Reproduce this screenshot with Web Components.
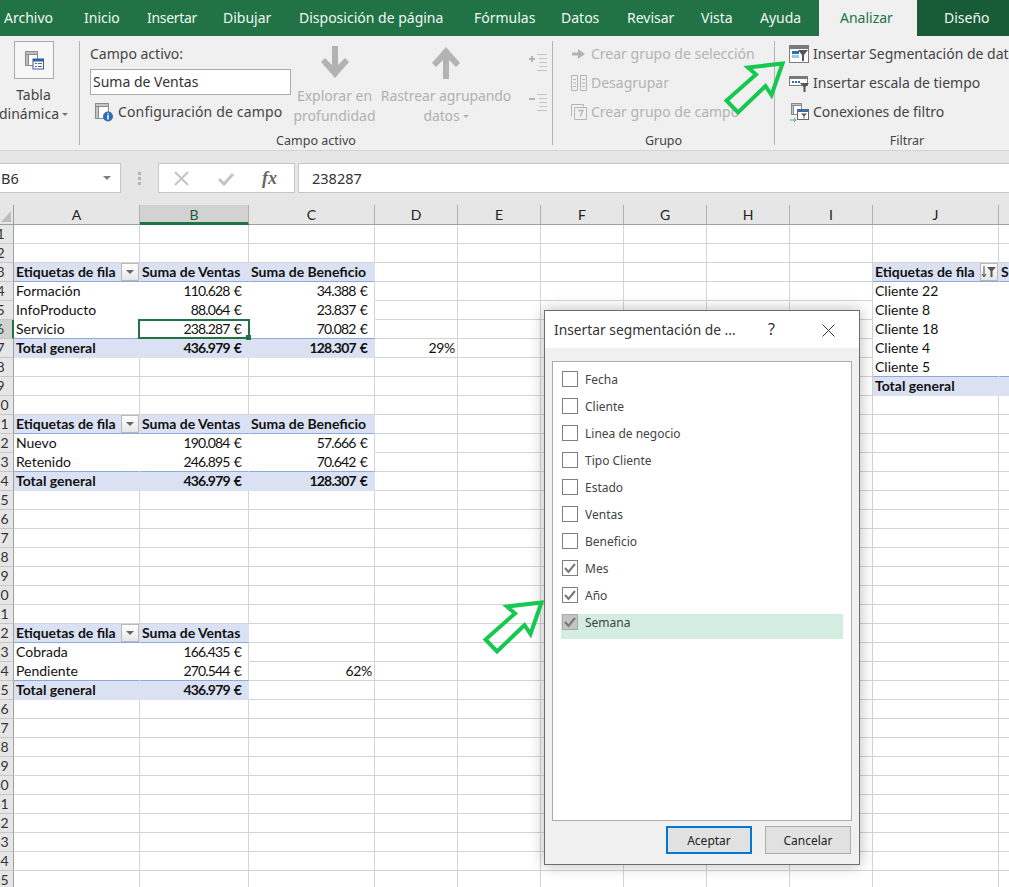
<!DOCTYPE html>
<html lang="es">
<head>
<meta charset="utf-8">
<title>Insertar segmentación de datos</title>
<style>
  html, body { margin: 0; height: 887px; overflow: hidden; background: #fff; }
  body { font-family: "Noto Sans", "Open Sans", sans-serif; position: relative; width: 1009px; }
</style>
</head>
<body>
<xl-tabs></xl-tabs>
<xl-ribbon></xl-ribbon>
<xl-formula-bar></xl-formula-bar>
<xl-sheet></xl-sheet>
<xl-dialog title-text="Insertar segmentación de ...">
  <xl-check>Fecha</xl-check>
  <xl-check>Cliente</xl-check>
  <xl-check>Linea de negocio</xl-check>
  <xl-check>Tipo Cliente</xl-check>
  <xl-check>Estado</xl-check>
  <xl-check>Ventas</xl-check>
  <xl-check>Beneficio</xl-check>
  <xl-check checked>Mes</xl-check>
  <xl-check checked>Año</xl-check>
  <xl-check checked active>Semana</xl-check>
</xl-dialog>
<xl-arrow style="left:720px;top:58px"></xl-arrow>
<xl-arrow style="left:479px;top:597px"></xl-arrow>

<script>
const UI_FONT = '"Noto Sans", "Open Sans", sans-serif'
const CELL_FONT = 'Lato, "Open Sans", sans-serif'

// Ribbon tab strip
const tabsTemplate = document.createElement('template')
tabsTemplate.innerHTML = `
  <style>
    :host { display: grid; height: 36px; background: #217346; color: #f2f7f4;
      font: 14px/35px ${UI_FONT}; white-space: nowrap;
      grid-template-columns: 84px 63px 76px 76px 175px 87px 66px 74px 59px 59px 98px 92px; }
    span { padding-left: 4px; }
    span + span { padding-left: 0; }
    .narrow { letter-spacing: -.3px; }
    .on { background: #f0f0f0; color: #217346; }
    .dark { background: #185c37; }
  </style>
  <span>Archivo</span><span>Inicio</span><span class="narrow">Insertar</span><span>Dibujar</span>
  <span>Disposición de página</span><span>Fórmulas</span><span>Datos</span><span>Revisar</span>
  <span>Vista</span><span>Ayuda</span><span class="on" style="padding-left:21px">Analizar</span>
  <span class="dark" style="padding-left:27px">Diseño</span>
`
customElements.define('xl-tabs', class extends HTMLElement {
  constructor () {
    super()
    this.attachShadow({ mode: 'open' }).appendChild(tabsTemplate.content.cloneNode(true))
  }
})

// One group of the ribbon, with its caption at the bottom
const groupTemplate = document.createElement('template')
groupTemplate.innerHTML = `
  <style>
    :host { display: flex; flex-direction: column; box-sizing: border-box; height: 104px;
      margin-top: 5px; border-right: 1px solid #b4b4b4; flex: none; }
    .body { flex: 1; min-height: 0; }
    .cap { font-size: 12.5px; line-height: 18px; height: 13px; text-align: center; color: #444; }
  </style>
  <div class="body"><slot></slot></div>
  <div class="cap"></div>
`
customElements.define('xl-group', class extends HTMLElement {
  constructor () {
    super()
    this.attachShadow({ mode: 'open' }).appendChild(groupTemplate.content.cloneNode(true))
    this.shadowRoot.querySelector('.cap').textContent = this.getAttribute('label') || ''
  }
})

// Icon plus text row used by the small ribbon commands
const cmdTemplate = document.createElement('template')
cmdTemplate.innerHTML = `
  <style>
    :host { display: flex; align-items: center; height: 29px; white-space: nowrap;
      font-size: 14px; color: #444; }
    :host([off]) { color: #b3b3b3; }
    .ico { width: var(--ico, 22px); display: flex; justify-content: center; flex: none; }
  </style>
  <span class="ico"><slot name="icon"></slot></span><slot></slot>
`
customElements.define('xl-cmd', class extends HTMLElement {
  constructor () {
    super()
    this.attachShadow({ mode: 'open' }).appendChild(cmdTemplate.content.cloneNode(true))
  }
})

// The whole ribbon
const ribbonTemplate = document.createElement('template')
ribbonTemplate.innerHTML = `
  <style>
    :host { display: flex; height: 115px; box-sizing: border-box; background: #f0f0f0;
      border-bottom: 1px solid #d4d4d4; font-size: 14px; color: #444; overflow: hidden; }
    .pivot { display: flex; flex-direction: column; align-items: center; width: 67px; white-space: nowrap; line-height: 19px; }
    .pivot .box { width: 38px; height: 36px; border: 1px solid #ababab; background: #f7f7f7;
      display: flex; align-items: center; justify-content: center; margin-bottom: 6px; flex: none; }
    .caret { display: inline-block; width: 0; height: 0; border: 3px solid transparent; border-top: 3px solid #777; border-bottom: 0; vertical-align: 3px; margin-left: 3px; }
    .active { display: flex; padding-left: 10px; }
    .field { width: 203px; flex: none; }
    .field .t { height: 28px; line-height: 26px; }
    .field .inp { box-sizing: border-box; width: 201px; height: 26px; border: 1px solid #ababab; background: #fff;
      line-height: 24px; padding-left: 2px; color: #333; }
    .field xl-cmd { --ico: 28px; height: 33px; letter-spacing: .15px; }
    .big { display: flex; flex-direction: column; align-items: center; flex: none; color: #b0b0b0;
      text-align: center; line-height: 20px; white-space: nowrap; }
    .big svg { margin: 5px 0 7px; display: block; }
    .big .caret { border-top-color: #b0b0b0; }
    .mini { display: flex; flex-direction: column; gap: 20px; padding: 12px 0 0 8px; }
    .cmds { padding: 0 0 0 13px; margin-top: -2px; }
    .f { margin-left: -2px; }
    .f xl-cmd, .g xl-cmd { --ico: 25px; height: 29px; }
    .ftext { margin-left: 2px; }
  </style>
  <xl-group style="width:80px">
    <div class="pivot">
      <div class="box">
        <svg width="20" height="20" viewBox="0 0 20 20"><path d="M1.5 1.5h12v14h-12z" fill="#fff" stroke="#8a8a8a"/><path d="M1.5 1.5h12v3h-12zM1.5 4.5h3v11h-3z" fill="#bdbdbd" stroke="#8a8a8a"/><rect x="9" y="9" width="10.5" height="10" fill="#fff" stroke="#2f5f9e"/><rect x="9" y="9" width="10.5" height="2.5" fill="#2f5f9e"/><path d="M11 13.5h2M14 13.5h4M11 16.5h2M14 16.5h4" stroke="#666"/></svg>
      </div>
      <span>Tabla</span>
      <span>dinámica<i class="caret"></i></span>
    </div>
  </xl-group>
  <xl-group style="width:473px" label="Campo activo">
    <div class="active">
      <div class="field">
        <div class="t">Campo activo:</div>
        <div class="inp">Suma de Ventas</div>
        <xl-cmd>
          <svg slot="icon" width="20" height="20" viewBox="0 0 20 20"><path d="M1.5 1.5h13v15h-13z" fill="#fff" stroke="#8a8a8a"/><path d="M1.5 1.5h13v3h-13zM1.5 4.5h3v12h-3z" fill="#c4c4c4" stroke="#8a8a8a"/><circle cx="14" cy="14.5" r="5" fill="#2f6eb5"/><path d="M14 13v4.5M14 11.2v1" stroke="#fff" stroke-width="1.5"/></svg>
          Configuración de campo
        </xl-cmd>
      </div>
      <div class="big" style="width:83px">
        <svg width="28" height="33" viewBox="0 0 28 33"><path d="M11 0h6v19l7-7 4 4-14 16L0 16l4-4 7 7z" fill="#b3b3b3"/></svg>
        <span>Explorar en</span><span>profundidad</span>
      </div>
      <div class="big" style="width:140px;letter-spacing:-.1px">
        <svg width="28" height="33" viewBox="0 0 28 33"><path d="M11 33h6V14l7 7 4-4L14 1 0 17l4 4 7-7z" fill="#b3b3b3"/></svg>
        <span>Rastrear agrupando</span><span>datos<i class="caret"></i></span>
      </div>
      <div class="mini" style="margin-left:4px">
        <svg width="20" height="20" viewBox="0 0 20 20"><path d="M1 6h6M4 3v6" stroke="#b3b3b3" stroke-width="2"/><path d="M9 1.500h10M11 5.500h8M11 9.500h8M11 13.500h8M9 17.500h10" stroke="#c6c6c6"/></svg>
        <svg width="20" height="20" viewBox="0 0 20 20"><path d="M1 6h6" stroke="#b3b3b3" stroke-width="2"/><path d="M9 1.500h10M11 5.500h8M11 9.500h8M11 13.500h8M9 17.500h10" stroke="#c6c6c6"/></svg>
      </div>
    </div>
  </xl-group>
  <xl-group class="g" style="width:222px" label="Grupo">
    <div class="cmds g">
      <xl-cmd off><svg slot="icon" width="14" height="12" viewBox="0 0 14 12"><path d="M0 4.500h6V1l7 5-7 5V7.500H0z" fill="#b3b3b3"/></svg>Crear grupo de selección</xl-cmd>
      <xl-cmd off><svg slot="icon" width="18" height="18" viewBox="0 0 18 18"><path d="M7.500 1.500h-6v15h6zM16.500 1.500h-6v15h6zM3 5.500h3M3 9h3M3 12.500h3M12 5.500h3M12 9h3M12 12.500h3" fill="none" stroke="#b5b5b5"/></svg>Desagrupar</xl-cmd>
      <xl-cmd off><svg slot="icon" width="18" height="18" viewBox="0 0 18 18"><path d="M1.500 13V1.500h12v2M4.500 4.500h12v12h-12z" fill="none" stroke="#b5b5b5"/><path d="M8 7.500h5l-3 6" fill="none" stroke="#b5b5b5" stroke-width="1.300"/></svg>Crear grupo de campo</xl-cmd>
    </div>
  </xl-group>
  <div style="flex:none;margin-top:5px">
    <div class="cmds f">
      <xl-cmd><svg slot="icon" width="20" height="18" viewBox="0 0 20 18"><rect x=".5" y=".5" width="19" height="17" fill="#fff" stroke="#7a7a7a"/><rect x="1" y="1" width="18" height="3" fill="#7a7a7a"/><path d="M3 6h7v3H3z" fill="#2f6eb5"/><path d="M3 10h7v3H3z" fill="#9dc3e6"/><path d="M9 5h10l-4 5v6h-2v-6z" fill="#555"/></svg><span class="ftext">Insertar Segmentación de datos</span></xl-cmd>
      <xl-cmd><svg slot="icon" width="20" height="18" viewBox="0 0 20 18"><rect x=".5" y="2.500" width="18" height="9" fill="#fff" stroke="#7a7a7a"/><rect x="1" y="3" width="17" height="2" fill="#7a7a7a"/><path d="M3 7h2v2H3zM6 7h2v2H6zM9 7h2v2H9z" fill="#2f6eb5"/><path d="M11 9h9l-3.500 4v5h-2v-5z" fill="#555"/></svg><span class="ftext">Insertar escala de tiempo</span></xl-cmd>
      <xl-cmd><svg slot="icon" width="20" height="20" viewBox="0 0 20 20"><path d="M2.500 1.500h10v11h-10z" fill="#fff" stroke="#8a8a8a"/><path d="M2.500 1.500h10v2h-10zM2.500 3.500h2v9h-2z" fill="#c4c4c4" stroke="#8a8a8a"/><rect x="8.500" y="7.500" width="11" height="10" fill="#fff" stroke="#666"/><rect x="9" y="8" width="10" height="2" fill="#2f6eb5"/><path d="M12 11.500h6l-2.500 2.500v2.500h-1V14z" fill="#555"/><path d="M1 18h6M5 16l2 2-2 2" fill="none" stroke="#5aa57a"/></svg><span class="ftext">Conexiones de filtro</span></xl-cmd>
    </div>
    <xl-group-caption></xl-group-caption>
  </div>
`
customElements.define('xl-ribbon', class extends HTMLElement {
  constructor () {
    super()
    this.attachShadow({ mode: 'open' }).appendChild(ribbonTemplate.content.cloneNode(true))
  }
})

// Caption of the last ribbon group, which runs past the edge of the window
const captionTemplate = document.createElement('template')
captionTemplate.innerHTML = `
  <style>
    :host { display: block; margin-top: 7px; width: 264px; text-align: center; font-size: 12.5px; line-height: 16px; color: #444; }
  </style>
  Filtrar
`
customElements.define('xl-group-caption', class extends HTMLElement {
  constructor () {
    super()
    this.attachShadow({ mode: 'open' }).appendChild(captionTemplate.content.cloneNode(true))
  }
})

// Name box and formula input
const formulaTemplate = document.createElement('template')
formulaTemplate.innerHTML = `
  <style>
    :host { display: flex; height: 54px; box-sizing: border-box; padding: 12px 0 12px; background: #e6e6e6;
      font-size: 14px; color: #333; }
    .w { background: #fff; border: 1px solid #c6c6c6; box-sizing: border-box; height: 30px; display: flex; align-items: center; flex: none; }
    .name { width: 122px; margin-left: -1px; padding-left: 1px; justify-content: space-between; padding-right: 9px; font-size: 14.500px; }
    .tri { width: 0; height: 0; border: 4px solid transparent; border-top: 4px solid #7d7d7d; border-bottom: 0; }
    .dots { width: 37px; flex: none; display: flex; flex-direction: column; align-items: center; justify-content: center; gap: 2px; }
    .dots i { width: 3px; height: 3px; background: #b4b4b4; display: block; }
    .fx { width: 137px; margin-right: 3px; gap: 27px; padding-left: 14px; box-sizing: border-box; }
    .fx i { font: italic bold 18px "Liberation Serif", serif; color: #666; }
    .val { flex: 1; padding-left: 13px; border-right: 0; font-size: 14.500px; }
  </style>
  <div class="w name"><span>B6</span><span class="tri"></span></div>
  <div class="dots"><i></i><i></i><i></i></div>
  <div class="w fx">
    <svg width="17" height="17" viewBox="0 0 17 17"><path d="M2 2l13 13M15 2L2 15" stroke="#c4c4c4" stroke-width="2"/></svg>
    <svg width="18" height="17" viewBox="0 0 18 17"><path d="M2 9l5 5 9-10" fill="none" stroke="#c4c4c4" stroke-width="3"/></svg>
    <i>fx</i>
  </div>
  <div class="w val">238287</div>
`
customElements.define('xl-formula-bar', class extends HTMLElement {
  constructor () {
    super()
    this.attachShadow({ mode: 'open' }).appendChild(formulaTemplate.content.cloneNode(true))
  }
})

// The worksheet grid, filled from a small table of cell data
const SHEET_ROWS = {
  3: { type: 'head', A: 'Etiquetas de fila', B: 'Suma de Ventas', C: 'Suma de Beneficio', J: 'Etiquetas de fila', K: 'Suma de Ventas' },
  4: { type: 'body', A: 'Formación', B: '110.628 €', C: '34.388 €', J: 'Cliente 22' },
  5: { type: 'body', A: 'InfoProducto', B: '88.064 €', C: '23.837 €', J: 'Cliente 8' },
  6: { type: 'last', A: 'Servicio', B: '238.287 €', C: '70.082 €', J: 'Cliente 18' },
  7: { type: 'total', A: 'Total general', B: '436.979 €', C: '128.307 €', D: '29%', J: 'Cliente 4' },
  8: { J: 'Cliente 5' },
  9: { J: 'Total general' },
  11: { type: 'head', A: 'Etiquetas de fila', B: 'Suma de Ventas', C: 'Suma de Beneficio' },
  12: { type: 'body', A: 'Nuevo', B: '190.084 €', C: '57.666 €' },
  13: { type: 'last', A: 'Retenido', B: '246.895 €', C: '70.642 €' },
  14: { type: 'total', A: 'Total general', B: '436.979 €', C: '128.307 €' },
  22: { type: 'head', narrow: true, A: 'Etiquetas de fila', B: 'Suma de Ventas' },
  23: { type: 'body', narrow: true, A: 'Cobrada', B: '166.435 €' },
  24: { type: 'last', narrow: true, A: 'Pendiente', B: '270.544 €', C: '62%' },
  25: { type: 'total', narrow: true, A: 'Total general', B: '436.979 €' }
}
// Rows of the second pivot table, the one in column J
const SIDE_TYPES = { 3: 'head', 4: 'body', 5: 'body', 6: 'body', 7: 'body', 8: 'last', 9: 'total' }
const COLUMNS = ['A', 'B', 'C', 'D', 'E', 'F', 'G', 'H', 'I', 'J', 'K']

const sheetTemplate = document.createElement('template')
sheetTemplate.innerHTML = `
  <style>
    :host { display: grid; margin-left: -12px; width: 1030px; font: 14px ${CELL_FONT}; color: #111;
      grid-template-columns: 26px 126px 109px 126px 83px 83px 83px 83px 83px 83px 126px 105px;
      grid-template-rows: 20px; grid-auto-rows: 19px; }
    div { box-sizing: border-box; border-right: 1px solid #d4d4d4; border-bottom: 1px solid #d4d4d4;
      white-space: nowrap; line-height: 18px; padding: 0 2px; position: relative; }
    .col { background: #e6e6e6; border-right-color: #b0b0b0; border-bottom-color: #9f9f9f;
      text-align: center; font: 14px/20px ${CELL_FONT}; color: #222; padding: 0; }
    .corner { border-right-color: #9f9f9f; }
    .corner::after { content: ""; position: absolute; left: 13px; bottom: 2px; width: 0; height: 0;
      border-left: 10px solid transparent; border-bottom: 11px solid #bdbdbd; }
    .col.sel { background: #d2d2d2; border-bottom: 3px solid #217346; color: #185c37; }
    .row { background: #e6e6e6; border-right-color: #9f9f9f; border-bottom-color: #c6c6c6; text-align: center;
      padding: 0; color: #333; }
    .row.sel { background: #d2d2d2; border-right: 2px solid #217346; color: #185c37; }
    .num { text-align: right; padding-right: 7px; letter-spacing: -.85px; word-spacing: 1.500px; }
    .pct { text-align: right; letter-spacing: -.3px; }
    .head, .total { background: #d9e1f2; font-weight: 700; border-right-color: #d9e1f2; }
    .head { border-bottom-color: #8ea9db; }
    .total { border-bottom-color: #d9e1f2; }
    .body { border-right-color: #fff; border-bottom-color: #fff; }
    .last { border-right-color: #fff; border-bottom-color: #8ea9db; }
    .edge { border-right-color: #d4d4d4; }
    .clip { overflow: hidden; }
    .btn { position: absolute; right: 0; top: 0; width: 18px; height: 18px; box-sizing: border-box;
      border: 1px solid #b9b9b9; background: linear-gradient(#fff, #e6e6e6); display: flex; align-items: center; justify-content: center; padding: 0; }
    .btn i { width: 0; height: 0; border: 4px solid transparent; border-top: 4px solid #666; border-bottom: 0; }
    .cursor { position: absolute; z-index: 2; left: -2px; top: -1px; right: -2px; bottom: -1px; border: 2px solid #217346; padding: 0; }
    .cursor::after { content: ""; position: absolute; right: -3px; bottom: -3px; width: 5px; height: 5px;
      background: #217346; }
  </style>
`

customElements.define('xl-sheet', class extends HTMLElement {
  constructor () {
    super()
    this.attachShadow({ mode: 'open' }).appendChild(sheetTemplate.content.cloneNode(true))
    this.#build()
  }

  /**
   * Creates the header row and all the cells.
   */
  #build () {
    const root = this.shadowRoot
    const corner = document.createElement('div')
    corner.className = 'col corner'
    root.appendChild(corner)
    for (const name of COLUMNS) {
      const head = document.createElement('div')
      head.className = name === 'B' ? 'col sel' : 'col'
      head.textContent = name === 'K' ? '' : name
      root.appendChild(head)
    }
    for (let r = 1; r <= 35; r++) {
      const row = document.createElement('div')
      row.className = r === 6 ? 'row sel' : 'row'
      row.textContent = r
      root.appendChild(row)
      for (const name of COLUMNS) root.appendChild(this.#cell(r, name))
    }
  }

  /**
   * Creates one cell of the grid.
   *
   * @param {number} r - The row number.
   * @param {string} name - The column letter.
   * @returns {HTMLElement} The cell.
   */
  #cell (r, name) {
    const data = SHEET_ROWS[r] || {}
    const cell = document.createElement('div')
    const text = data[name]
    if (text) cell.textContent = text

    const side = name === 'J' || name === 'K'
    const type = side ? SIDE_TYPES[r] : data.type
    const cols = data.narrow ? ['A', 'B'] : ['A', 'B', 'C']
    if (side && type) {
      cell.classList.add(type)
    } else if (type && cols.includes(name)) {
      cell.classList.add(type)
      if (name === cols[cols.length - 1] && type !== 'head' && type !== 'total') cell.classList.add('edge')
    }
    if (name !== 'A' && name !== 'J' && name !== 'K' && type !== 'head' && text) {
      cell.classList.add(cols.includes(name) ? 'num' : 'pct')
    }
    if (name === 'K') cell.classList.add('clip')

    if ((r === 3 || r === 11 || r === 22) && name === 'A') cell.appendChild(this.#button())
    if (r === 3 && name === 'J') cell.appendChild(this.#button(true))
    if (r === 6 && name === 'B') {
      const cursor = document.createElement('div')
      cursor.className = 'cursor'
      cell.appendChild(cursor)
    }
    return cell
  }

  /**
   * Creates the drop-down button of a pivot table header.
   *
   * @param {boolean} filtered - Whether the button shows the sort and filter mark.
   * @returns {HTMLElement} The button.
   */
  #button (filtered) {
    const button = document.createElement('div')
    button.className = 'btn'
    button.innerHTML = filtered
      ? '<svg width="16" height="14" viewBox="0 0 16 14"><path d="M3 1v10M1 9l2 3 2-3" fill="none" stroke="#444"/><path d="M6 2h9l-3.500 4v6h-2V6z" fill="#555"/></svg>'
      : '<i></i>'
    return button
  }
})

// One row of the dialog's check list
const checkTemplate = document.createElement('template')
checkTemplate.innerHTML = `
  <style>
    :host { display: flex; align-items: flex-start; height: 27px; font-size: 12px; color: #444; }
    .box { width: 16px; height: 16px; box-sizing: border-box; border: 1px solid #7f7f7f; background: #fff; flex: none;
      margin: 0 7px 0 1px; display: flex; align-items: center; justify-content: center; }
    svg { visibility: hidden; }
    :host([checked]) svg { visibility: visible; }
    :host([active]) { background: #d3eee0; height: 25px; }
    :host([active]) .box { background: #c4c4c4; border-color: #aaa; }
    .t { line-height: 18px; }
  </style>
  <span class="box"><svg width="12" height="12" viewBox="0 0 12 12"><path d="M1 6l3.500 4L11 2" fill="none" stroke="#777" stroke-width="2"/></svg></span>
  <span class="t"><slot></slot></span>
`
customElements.define('xl-check', class extends HTMLElement {
  constructor () {
    super()
    this.attachShadow({ mode: 'open' }).appendChild(checkTemplate.content.cloneNode(true))
  }
})

// The floating dialog
const dialogTemplate = document.createElement('template')
dialogTemplate.innerHTML = `
  <style>
    :host { position: absolute; left: 544px; top: 310px; width: 316px; height: 555px; box-sizing: border-box;
      border: 1px solid #6d6d6d; background: #f0f0f0; box-shadow: 0 0 14px rgba(0, 0, 0, .28);
      display: flex; flex-direction: column; color: #333; }
    .title { height: 37px; flex: none; background: #fff; display: flex; align-items: center; padding-left: 9px; font-size: 13.800px; }
    .title .t { width: 214px; white-space: nowrap; }
    .title .q { width: 53px; font-size: 16px; line-height: 36px; height: 37px; }
    .title svg { margin: 2px 0 0 1px; }
    .list { box-sizing: border-box; margin: 13px 7px 0; height: 460px; background: #fff; border: 1px solid #acacac;
      padding: 9px 8px 0 8px; flex: none; }
    .foot { display: flex; justify-content: flex-end; gap: 13px; padding: 5px 8px 0 0; }
    button { box-sizing: border-box; width: 86px; height: 28px; background: #e1e1e1; border: 1px solid #adadad;
      font: 12px "Noto Sans", sans-serif; color: #222; padding: 0; }
    button.def { border: 2px solid #0078d7; }
  </style>
  <div class="title">
    <span class="t"></span><span class="q">?</span>
    <svg width="13" height="13" viewBox="0 0 13 13"><path d="M.5.5l12 12M12.500.5l-12 12" stroke="#333" fill="none"/></svg>
  </div>
  <div class="list"><slot></slot></div>
  <div class="foot"><button class="def">Aceptar</button><button>Cancelar</button></div>
`
customElements.define('xl-dialog', class extends HTMLElement {
  constructor () {
    super()
    this.attachShadow({ mode: 'open' }).appendChild(dialogTemplate.content.cloneNode(true))
    this.shadowRoot.querySelector('.t').textContent = this.getAttribute('title-text')
  }
})

// Green callout arrow drawn over the screenshot
const arrowTemplate = document.createElement('template')
arrowTemplate.innerHTML = `
  <style>
    :host { position: absolute; width: 70px; height: 62px; pointer-events: none; }
    svg { display: block; }
  </style>
  <svg width="70" height="62" viewBox="0 0 70 62"><path d="M62.500 5.500 28 9.500 36 16.500 6.500 42.500 18 54.500 45.500 28 51.500 37z" fill="none" stroke="#14c850" stroke-width="4"/></svg>
`
customElements.define('xl-arrow', class extends HTMLElement {
  constructor () {
    super()
    this.attachShadow({ mode: 'open' }).appendChild(arrowTemplate.content.cloneNode(true))
  }
})
</script>
</body>
</html>
